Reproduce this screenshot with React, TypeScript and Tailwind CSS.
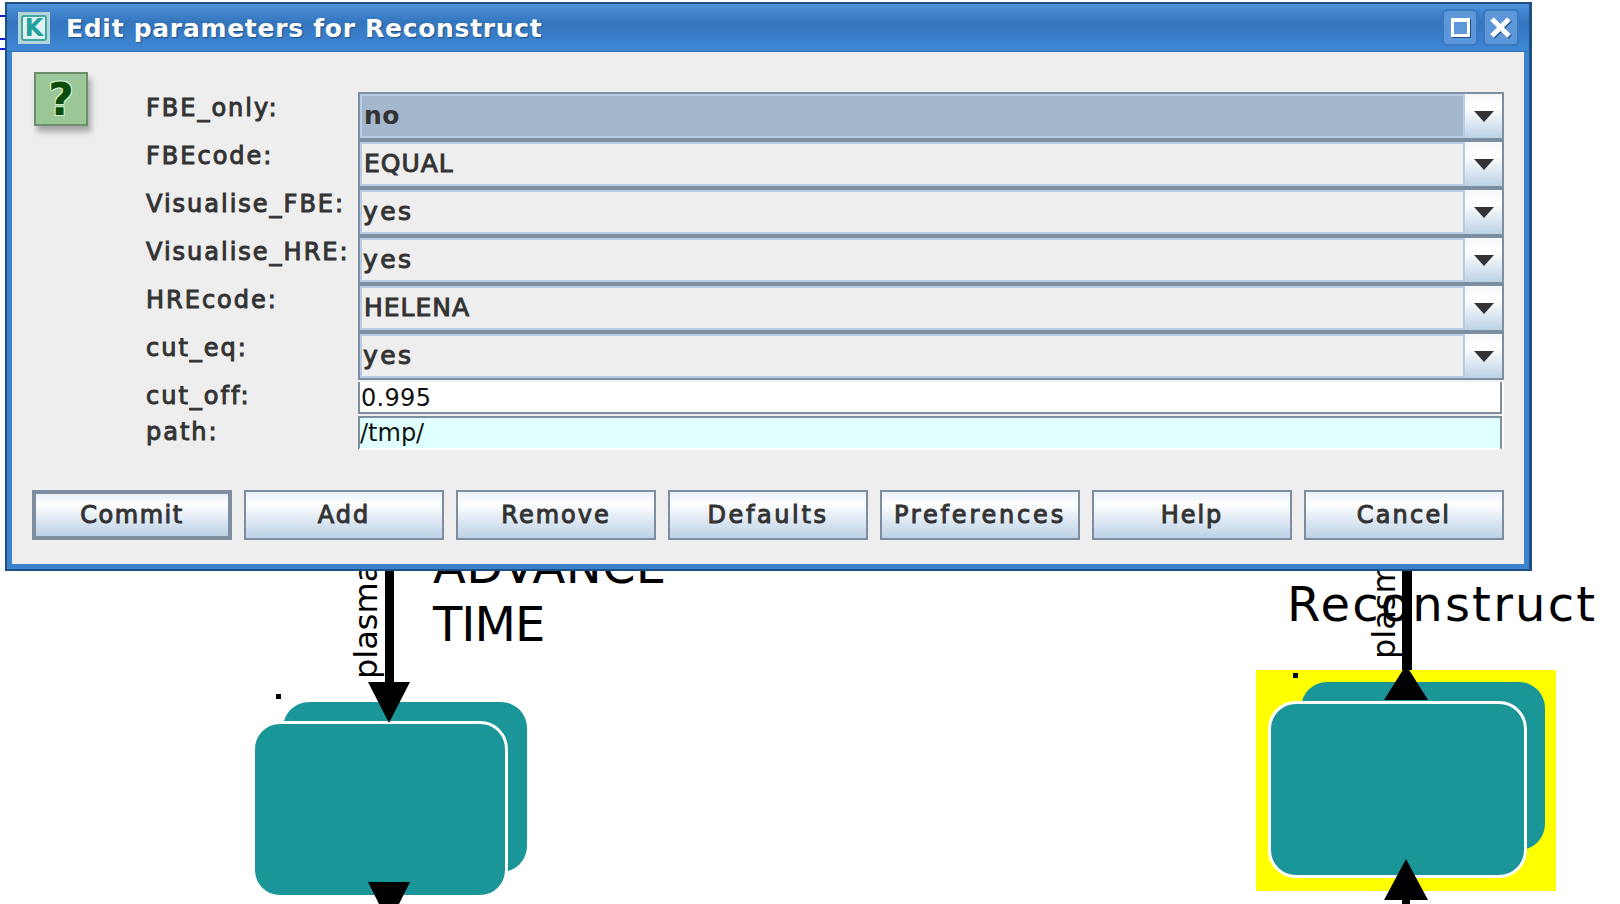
import React from 'react';

const sans = "font-['DejaVu_Sans',sans-serif]";
const labelBase = 'text-[24px] font-normal text-[#333333] [-webkit-text-stroke:1px_#333333]';
const labelText = `${labelBase} tracking-[2px]`;

const fields = [
  { label: 'FBE_only:', value: 'no', selected: true, tx: 'pl-[2px] font-bold tracking-[0.5px]' },
  { label: 'FBEcode:', value: 'EQUAL', selected: false, tx: 'pl-[2px] tracking-[1px]' },
  { label: 'Visualise_FBE:', value: 'yes', selected: false, tx: 'pl-[1px] tracking-[2.4px]' },
  { label: 'Visualise_HRE:', value: 'yes', selected: false, tx: 'pl-[1px] tracking-[2.4px]' },
  { label: 'HREcode:', value: 'HELENA', selected: false, tx: 'pl-[2px] tracking-[1px]' },
  { label: 'cut_eq:', value: 'yes', selected: false, tx: 'pl-[1px] tracking-[2.4px]' },
];

const buttons = [
  { text: 'Commit', tx: 'tracking-[1.5px]' },
  { text: 'Add', tx: 'tracking-[2px]' },
  { text: 'Remove', tx: 'tracking-[2px]' },
  { text: 'Defaults', tx: 'tracking-[2.6px]' },
  { text: 'Preferences', tx: 'tracking-[2.8px]' },
  { text: 'Help', tx: 'tracking-[2px]' },
  { text: 'Cancel', tx: 'tracking-[2.2px]' },
];

function ComboRow({ label, value, selected, tx }: (typeof fields)[number]) {
  return (
    <>
      <div className={`h-[48px] flex items-center pb-[16px] ${labelText}`}>{label}</div>
      <div className="h-[48px] flex border-2 border-[#7d8ea0]">
        <div
          className={`flex-1 flex items-center border-2 border-[#b8cde4] text-[25px] text-[#333333] ${tx} ${
            selected ? 'bg-[#a3b8cc]' : 'bg-[#eeeeee] font-normal [-webkit-text-stroke:1px_#333333]'
          }`}
        >
          {value}
        </div>
        <div className="w-[37px] flex items-center justify-center bg-gradient-to-b from-[#f4f7fb] via-[#ffffff] via-30% to-[#bcd1e6]">
          <svg width="20" height="11" viewBox="0 0 20 11" className="mt-[1px]">
            <path d="M0 0h20L10 11z" fill="#333333" />
          </svg>
        </div>
      </div>
    </>
  );
}

function Block({ back, front }: { back: string; front: string }) {
  return (
    <>
      <div className={`absolute bg-[#1a9699] rounded-[26px] ${back}`} />
      <div className={`absolute bg-[#1a9699] border-[3px] border-white rounded-[28px] ${front}`} />
    </>
  );
}

export default function App() {
  return (
    <div className={`relative w-[1620px] h-[904px] bg-white overflow-hidden ${sans}`}>
      {/* diagram behind the dialog */}
      <svg className="absolute left-0 top-0" width="6" height="60" viewBox="0 0 6 60">
        <path d="M0 16h5M0 39h5M0 49h5" stroke="#1c1ce0" strokeWidth="2" fill="none" />
      </svg>

      <div className="absolute left-[433px] top-[537px] text-[48px] leading-[58px] text-black">
        <div className="tracking-[0.3px]">ADVANCE</div>
        <div className="tracking-[-1px]">TIME</div>
      </div>
      <div className="absolute left-[276px] top-[694px] w-[5px] h-[5px] bg-black" />
      <Block back="left-[283px] top-[702px] w-[244px] h-[170px]" front="left-[252px] top-[721px] w-[256px] h-[177px]" />
      <div className="absolute left-[385px] top-[560px] w-[9px] h-[130px] bg-black" />
      <div className="absolute left-[352px] top-[679px] origin-top-left -rotate-90 text-[32px] leading-[28px] text-black whitespace-nowrap">
        plasma
      </div>
      <svg className="absolute left-[368px] top-[682px]" width="42" height="42" viewBox="0 0 42 42">
        <path d="M0 0h42L21 41z" fill="#000" />
      </svg>
      <svg className="absolute left-[368px] top-[882px]" width="42" height="22" viewBox="0 0 42 22">
        <path d="M0 0h42L31 22H11z" fill="#000" />
      </svg>

      <div className="absolute left-[1256px] top-[670px] w-[300px] h-[221px] bg-[#ffff00]" />
      <div className="absolute left-[1293px] top-[673px] w-[5px] h-[5px] bg-black" />
      <Block back="left-[1301px] top-[682px] w-[244px] h-[168px]" front="left-[1268px] top-[701px] w-[259px] h-[177px]" />
      <div className="absolute left-[1287px] top-[575px] text-[48px] leading-[58px] tracking-[2.2px] text-black whitespace-nowrap">
        Reconstruct
      </div>
      <div className="absolute left-[1402px] top-[560px] w-[10px] h-[110px] bg-black" />
      <div className="absolute left-[1372px] top-[659px] origin-top-left -rotate-90 text-[32px] leading-[24px] text-black whitespace-nowrap">
        plasma
      </div>
      <svg className="absolute left-[1384px] top-[665px]" width="44" height="36" viewBox="0 0 44 36">
        <path d="M22 0L44 35H0z" fill="#000" />
      </svg>
      <svg className="absolute left-[1384px] top-[859px]" width="44" height="45" viewBox="0 0 44 45">
        <path d="M22 0L44 41H26v4h-8v-4H0z" fill="#000" />
      </svg>

      {/* dialog */}
      <div className="absolute left-[5px] top-[2px] w-[1527px] h-[569px] flex flex-col border-t-2 border-l-2 border-r-[3px] border-b-2 border-[#1d4f83]">
        <div className="h-[48px] shrink-0 flex items-center bg-gradient-to-b from-[#4d92dc] via-[#3375bd] via-40% to-[#3f88d6] pl-[11px] pr-[10px] border-b border-[#3274bc]">
          <div className="w-[32px] h-[32px] bg-[#b6d5d9] flex items-center justify-center">
            <div className="w-[26px] h-[26px] bg-[#dff1f1] border-2 border-[#3fa6a6] rounded-[3px] flex items-center justify-center text-[24px] leading-none font-bold text-[#22a09c]">
              K
            </div>
          </div>
          <div className="ml-[16px] mt-[3px] flex-1 text-[25px] font-bold text-white tracking-[0.7px] [text-shadow:1px_1px_1px_#1d4f83]">
            Edit parameters for Reconstruct
          </div>
          <div className="w-[36px] h-[37px] bg-[#5b97d9] border-2 border-[#3a78bf] rounded-[5px] flex items-center justify-center">
            <div className="w-[19px] h-[19px] border-[3px] border-t-[4px] border-white shadow-[1px_1px_0_#1d4f83]" />
          </div>
          <div className="ml-[5px] w-[36px] h-[37px] bg-[#5b97d9] border-2 border-[#3a78bf] rounded-[5px] flex items-center justify-center">
            <svg width="22" height="22" viewBox="0 0 22 22">
              <path d="M3 3l17 17M20 3L3 20" stroke="#1d4f83" strokeWidth="5" fill="none" />
              <path d="M2 2l17 17M19 2L2 19" stroke="#fff" strokeWidth="5" fill="none" />
            </svg>
          </div>
        </div>

        <div className="flex-1 flex flex-col bg-[#eeeeee] border-x-[5px] border-b-[5px] border-[#3b82cf]">
          <div className="flex items-start pr-[20px]">
            <div className="ml-[22px] mt-[20px] w-[54px] h-[54px] shrink-0 bg-[#9bc799] border-2 border-[#6a8f6a] shadow-[3px_6px_6px_rgba(0,0,0,0.3)] flex items-center justify-center pt-[2px] text-[44px] leading-none font-bold text-[#0c4d0c] [text-shadow:1px_1px_0_#d0f0c8,-1px_-1px_0_#d0f0c8,1px_-1px_0_#d0f0c8,-1px_1px_0_#d0f0c8]">
              ?
            </div>
            <div className="ml-[58px] mt-[40px] flex-1 grid grid-cols-[212px_1fr]">
              {fields.map((f) => (
                <ComboRow key={f.label} {...f} />
              ))}

              <div className={`h-[34px] flex items-center pb-[2px] ${labelText}`}>cut_off:</div>
              <div className="h-[34px] pt-[2px] border-r-2 border-white">
                <div className="h-full flex items-center pt-[2px] bg-white border-l-2 border-b-2 border-r-2 border-[#7d8ea0] text-[24px] font-normal tracking-[0.3px] text-[#111111] pl-[1px]">
                  0.995
                </div>
              </div>
              <div className={`h-[36px] flex items-center ${labelText}`}>path:</div>
              <div className="h-[36px] pt-[2px] border-r-2 border-white">
                <div className="h-full flex items-center bg-[#e0ffff] border-t-2 border-l-2 border-r-2 border-b-2 border-[#7d8ea0] border-b-white text-[24px] font-normal text-[#111111]">
                  /tmp/
                </div>
              </div>
            </div>
          </div>

          <div className="mt-[40px] pl-[20px] flex gap-3">
            {buttons.map((b, i) => (
              <div
                key={b.text}
                className={`w-[200px] h-[50px] flex items-center justify-center bg-gradient-to-b from-[#e9eff7] via-[#ffffff] via-25% to-[#bcd1e6] border-[#7d8ea0] ${labelBase} ${b.tx} ${
                  i === 0 ? 'border-[4px]' : 'border-2'
                }`}
              >
                {b.text}
              </div>
            ))}
          </div>
        </div>
      </div>
    </div>
  );
}
